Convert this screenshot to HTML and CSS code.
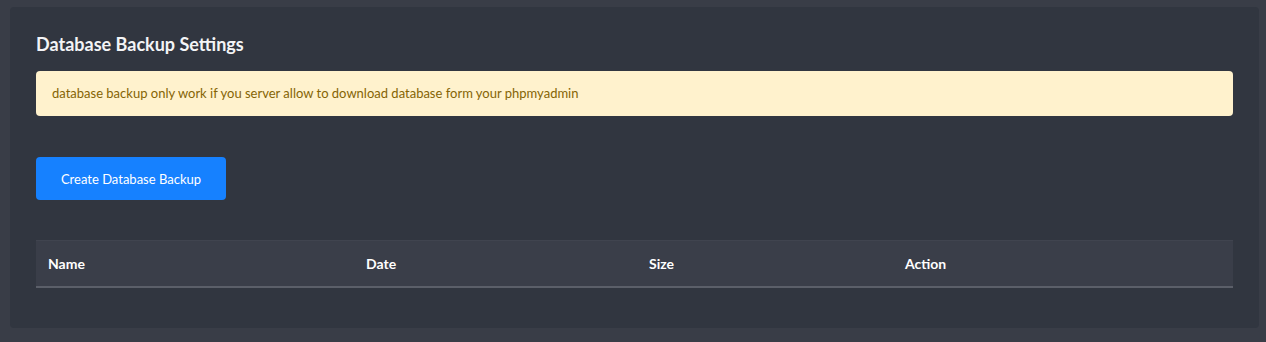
FILE: index.html
```html
<!DOCTYPE html>
<html>
<head>
<meta charset="utf-8">
<link rel="stylesheet" href="styles.css">
</head>
<body>
<div class="card">
  <h4 class="title">Database Backup Settings</h4>
  <div class="alert">database backup only work if you server allow to download database form your phpmyadmin</div>
  <button class="btn">Create Database Backup</button>
  <table class="table">
    <thead>
      <tr>
        <th class="c1">Name</th>
        <th class="c2">Date</th>
        <th class="c3">Size</th>
        <th class="c4">Action</th>
      </tr>
    </thead>
    <tbody></tbody>
  </table>
</div>
</body>
</html>
```
FILE: styles.css
```css
html, body { margin: 0; padding: 0; }
body {
  background: #393d47;
  font-family: Lato, "Open Sans", sans-serif;
  padding: 7px 7px 14px 10px;
}
.card {
  background: #313640;
  border-radius: 4px;
  padding: 26px 26px 40px 26px;
  height: 321px;
  box-sizing: border-box;
}
.title {
  margin: 0;
  color: #f3f4f6;
  font-size: 18px;
  font-weight: 700;
  line-height: 22px;
  height: 22px;
}
.alert {
  margin-top: 16px;
  background: #fff2cd;
  color: #856404;
  border-radius: 4px;
  font-size: 13px;
  line-height: 20px;
  padding: 12px 16px 13px;
}
.btn {
  display: block;
  margin-top: 41px;
  background: #1681ff;
  color: #fff;
  border: none;
  border-radius: 4px;
  font-family: Lato, sans-serif;
  font-size: 13px;
  height: 43px;
  width: 190px;
  padding: 0;
}
.table {
  margin-top: 40px;
  width: 100%;
  border-collapse: collapse;
  table-layout: fixed;
}
.table th {
  background: #3a3e49;
  color: #fff;
  text-align: left;
  font-size: 14px;
  font-weight: 700;
  padding: 0 12px;
  height: 45px;
  border-top: 1px solid #40444f;
  border-bottom: 2px solid #5b5f69;
}
.c1 { width: 294px; }
.c2 { width: 259px; }
.c3 { width: 232px; }
```
